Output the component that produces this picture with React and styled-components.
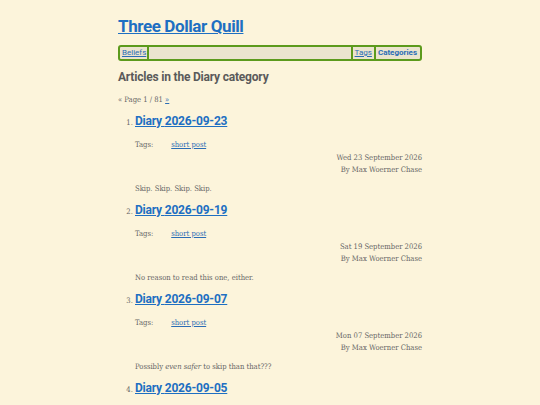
import React from 'react';
import styled, { createGlobalStyle } from 'styled-components';

const GlobalStyle = createGlobalStyle`
  html, body {
    margin: 0;
    padding: 0;
    background: #fcf4db;
  }
  body {
    font-family: "DejaVu Serif Condensed", "DejaVu Serif", serif;
    color: #555;
  }
`;

const Page = styled.div`
  width: 304px;
  margin: 0 auto;
  padding-top: 15px;
`;

const SiteTitle = styled.h1`
  margin: 0 0 8px;
  font-family: Roboto, "Open Sans", sans-serif;
  font-size: 17px;
  font-weight: 700;
  line-height: 22px;
  letter-spacing: -0.4px;
  & a {
    color: #1e6fc2;
  }
`;

const Nav = styled.nav`
  display: flex;
  align-items: stretch;
  border: 2px solid #5c9a1c;
  border-radius: 3px;
  background: #ebe4ce;
  font-family: Roboto, "Open Sans", sans-serif;
  font-size: 8px;
  line-height: 12px;
  padding: 0 1px;
`;

const NavItem = styled.a`
  padding: 0 ${(p) => (p.first ? '1px' : '2px')};
  color: #2b6db5;
  font-weight: ${(p) => (p.current ? 700 : 400)};
  text-decoration: ${(p) => (p.current ? 'none' : 'underline')};
  border-left: ${(p) => (p.first ? 'none' : '2px solid #5c9a1c')};
  border-right: ${(p) => (p.first ? '2px solid #5c9a1c' : 'none')};
`;

const NavFill = styled.span`
  flex: 1;
`;

const SectionTitle = styled.h2`
  margin: 8px 0 9px;
  font-family: Roboto, "Open Sans", sans-serif;
  font-size: 12px;
  font-weight: 700;
  line-height: 16px;
  letter-spacing: -0.2px;
  color: #5a5a5a;
`;

const Pager = styled.p`
  margin: 0 0 6px;
  font-size: 7.6px;
  line-height: 11px;
  color: #666;
  & a {
    color: #2b6db5;
  }
`;

const ArticleList = styled.ol`
  margin: 0;
  padding-left: 17px;
  font-size: 7.6px;
`;

const Article = styled.li`
  margin-bottom: 5px;
  color: #666;
`;

const ArticleTitle = styled.h3`
  display: inline-block;
  margin: 0;
  font-family: Roboto, "Open Sans", sans-serif;
  font-size: 12px;
  font-weight: 700;
  line-height: 20px;
  letter-spacing: -0.2px;
  & a {
    color: #1e6fc2;
  }
`;

const TagLine = styled.div`
  display: flex;
  gap: 18px;
  margin-top: 8px;
  line-height: 11px;
  & a {
    color: #2b6db5;
  }
`;

const Meta = styled.div`
  text-align: right;
  line-height: 12px;
  margin-top: 2px;
`;

const Summary = styled.p`
  margin: 7px 0 0;
  line-height: 12px;
`;

const articles = [
  { date: '2026-09-23', long: 'Wed 23 September 2026', summary: <>Skip. Skip. Skip. Skip.</> },
  { date: '2026-09-19', long: 'Sat 19 September 2026', summary: <>No reason to read this one, either.</> },
  {
    date: '2026-09-07',
    long: 'Mon 07 September 2026',
    summary: (
      <>
        Possibly <em>even safer</em> to skip than that???
      </>
    ),
  },
  { date: '2026-09-05', long: 'Sat 05 September 2026', summary: <>Skip.</> },
];

export default function App() {
  return (
    <>
      <GlobalStyle />
      <Page>
        <SiteTitle>
          <a href="#">Three Dollar Quill</a>
        </SiteTitle>
        <Nav>
          <NavItem href="#" first>
            Beliefs
          </NavItem>
          <NavFill />
          <NavItem href="#">Tags</NavItem>
          <NavItem href="#" current>
            Categories
          </NavItem>
        </Nav>
        <SectionTitle>Articles in the Diary category</SectionTitle>
        <Pager>
          « Page 1 / 81 <a href="#">»</a>
        </Pager>
        <ArticleList>
          {articles.map((a) => (
            <Article key={a.date}>
              <ArticleTitle>
                <a href="#">Diary {a.date}</a>
              </ArticleTitle>
              <TagLine>
                <span>Tags:</span>
                <a href="#">short post</a>
              </TagLine>
              <Meta>
                {a.long}
                <br />
                By Max Woerner Chase
              </Meta>
              <Summary>{a.summary}</Summary>
            </Article>
          ))}
        </ArticleList>
      </Page>
    </>
  );
}
